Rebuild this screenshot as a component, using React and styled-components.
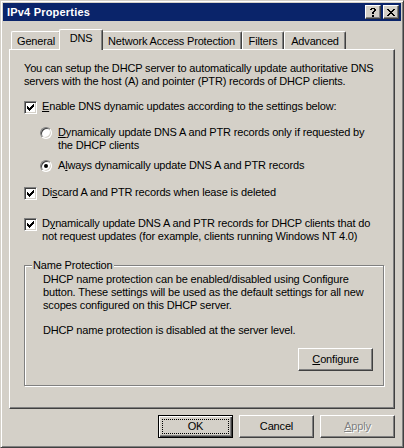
import React from 'react';
import styled, { createGlobalStyle } from 'styled-components';

const face = '#D4D0C8';
const shadow = '#808080';
const dark = '#404040';

const GlobalStyle = createGlobalStyle`
  * {
    box-sizing: border-box;
  }

  body {
    margin: 0;
    background: ${face};
    font-family: 'Liberation Sans', Arial, sans-serif;
    font-size: 11px;
    line-height: 13px;
    letter-spacing: -0.16px;
    color: #000;
  }
`;

const Window = styled.div`
  display: flex;
  flex-direction: column;
  width: 404px;
  height: 448px;
  padding: 2px;
  border: 1px solid;
  border-color: ${face} ${dark} ${dark} ${face};
  box-shadow: inset 1px 1px #fff, inset -1px -1px ${shadow};
  background: ${face};
`;

const TitleBar = styled.div`
  display: flex;
  align-items: center;
  height: 18px;
  padding: 0 2px;
  background: #0a246a;
`;

const Title = styled.div`
  flex: 1;
  padding-left: 2px;
  font-weight: bold;
  letter-spacing: 0.2px;
  color: #fff;
`;

const CaptionButtons = styled.div`
  display: flex;
  gap: 2px;
`;

const CaptionButton = styled.div`
  display: flex;
  align-items: center;
  justify-content: center;
  width: 16px;
  height: 14px;
  border: 1px solid;
  border-color: #fff ${dark} ${dark} #fff;
  box-shadow: inset -1px -1px ${shadow};
  background: ${face};

  svg {
    display: block;
  }
`;

const Body = styled.div`
  display: flex;
  flex-direction: column;
  padding: 8px 0 0 6px;
`;

const TabStrip = styled.div`
  position: relative;
  z-index: 1;
  display: flex;
  align-items: flex-end;
  height: 20px;
  margin-left: 2px;
`;

const Tab = styled.div`
  position: relative;
  z-index: ${({ $active }) => ($active ? 2 : 1)};
  width: ${({ $w, $active }) => $w + ($active ? 4 : 0)}px;
  height: ${({ $active }) => ($active ? 21 : 18)}px;
  margin: 0 ${({ $active }) => ($active ? -2 : 0)}px
    ${({ $active }) => ($active ? -1 : 0)}px;
  padding-top: ${({ $active }) => ($active ? 2 : 3)}px;
  border-top: 1px solid #fff;
  border-left: 1px solid #fff;
  border-right: 1px solid ${dark};
  border-radius: 2px 2px 0 0;
  box-shadow: inset -1px 0 ${shadow};
  background: ${face};
  text-align: center;
  white-space: nowrap;
`;

const Panel = styled.div`
  display: flex;
  flex-direction: column;
  align-items: flex-start;
  width: 386px;
  height: 360px;
  padding: 12px 0 0 14px;
  border-top: 1px solid #fff;
  border-left: 1px solid #fff;
  border-right: 1px solid ${dark};
  border-bottom: 1px solid ${dark};
  box-shadow: inset -1px -1px ${shadow};
`;

const Text = styled.p`
  margin: ${({ $top }) => $top || 0}px 0 0 ${({ $left }) => $left || 0}px;
  white-space: nowrap;
`;

const Option = styled.label`
  display: flex;
  align-items: flex-start;
  gap: ${({ $radio }) => ($radio ? 6 : 5)}px;
  margin: ${({ $top }) => $top}px 0 0 ${({ $indent }) => $indent || 0}px;
  white-space: nowrap;
`;

const CheckBox = styled.span`
  display: flex;
  align-items: center;
  justify-content: center;
  flex: none;
  width: 13px;
  height: 13px;
  margin-top: 1px;
  border: 1px solid;
  border-color: ${shadow} #fff #fff ${shadow};
  box-shadow: inset 1px 1px ${dark}, inset -1px -1px ${face};
  background: #fff;

  svg {
    display: block;
  }
`;

const Radio = styled.span`
  display: flex;
  align-items: center;
  justify-content: center;
  flex: none;
  width: 12px;
  height: 12px;
  margin-top: 1px;
  border: 1px solid;
  border-color: ${shadow} #fff #fff ${shadow};
  border-radius: 50%;
  box-shadow: inset 1px 1px ${dark}, inset -1px -1px ${face};
  background: #fff;

  &::after {
    content: '';
    display: ${({ $checked }) => ($checked ? 'block' : 'none')};
    width: 4px;
    height: 4px;
    border-radius: 50%;
    background: #000;
  }
`;

const U = styled.span`
  text-decoration: underline;
`;

const Group = styled.fieldset`
  width: 360px;
  margin: 16px 0 0;
  padding: 1px 10px 14px 7px;
  border: 1px solid ${shadow};
  box-shadow: inset 1px 1px #fff, 1px 1px #fff;
  min-inline-size: 0;
`;

const Legend = styled.legend`
  padding: 0 1px;
  background: ${face};
`;

const GroupActions = styled.div`
  display: flex;
  justify-content: flex-end;
  margin-top: 11px;
`;

const ButtonRow = styled.div`
  display: flex;
  justify-content: flex-end;
  gap: 6px;
  width: 386px;
  margin-top: 6px;
`;

const Button = styled.div`
  display: flex;
  align-items: stretch;
  flex: none;
  width: 75px;
  height: 23px;
  padding: ${({ $default }) => ($default ? 3 : 0)}px;
  border: 1px solid;
  border-color: ${({ $default }) =>
    $default ? '#000' : `#fff ${dark} ${dark} #fff`};
  box-shadow: ${({ $default }) =>
    $default
      ? `inset 1px 1px #fff, inset -1px -1px ${dark}, inset -2px -2px ${shadow}`
      : `inset -1px -1px ${shadow}`};
  background: ${face};
  color: ${({ $disabled }) => ($disabled ? shadow : '#000')};
  text-shadow: ${({ $disabled }) => ($disabled ? '1px 1px #fff' : 'none')};
`;

const ButtonLabel = styled.span`
  display: flex;
  flex: 1;
  align-items: center;
  justify-content: center;
  border: 1px dotted ${({ $focus }) => ($focus ? '#000' : 'transparent')};
`;

const Pixels = ({ rows, color = '#000' }) => (
  <svg
    width={rows[0].length}
    height={rows.length}
    shapeRendering="crispEdges"
  >
    {rows.flatMap((row, y) =>
      [...row].map((c, x) =>
        c === 'X' ? (
          <rect key={`${x}-${y}`} x={x} y={y} width="1" height="1" fill={color} />
        ) : null
      )
    )}
  </svg>
);

const helpGlyph = [
  '.XXXX.',
  'XX..XX',
  '....XX',
  '...XX.',
  '..XX..',
  '..XX..',
  '......',
  '..XX..',
  '..XX..',
];

const closeGlyph = [
  'XX....XX',
  '.XX..XX.',
  '..XXXX..',
  '...XX...',
  '..XXXX..',
  '.XX..XX.',
  'XX....XX',
];

const checkGlyph = [
  '......X',
  '.....XX',
  'X...XXX',
  'XX.XXX.',
  'XXXXX..',
  '.XXX...',
  '..X....',
];

const tabs = [
  { label: 'General', w: 50 },
  { label: 'DNS', w: 40, active: true },
  { label: 'Network Access Protection', w: 141 },
  { label: 'Filters', w: 42 },
  { label: 'Advanced', w: 62 },
];

const Check = ({ checked }) => (
  <CheckBox>{checked && <Pixels rows={checkGlyph} />}</CheckBox>
);

const App = () => (
  <>
    <GlobalStyle />
    <Window>
      <TitleBar>
        <Title>IPv4 Properties</Title>
        <CaptionButtons>
          <CaptionButton>
            <Pixels rows={helpGlyph} />
          </CaptionButton>
          <CaptionButton>
            <Pixels rows={closeGlyph} />
          </CaptionButton>
        </CaptionButtons>
      </TitleBar>
      <Body>
        <TabStrip>
          {tabs.map((t) => (
            <Tab key={t.label} $w={t.w} $active={t.active}>
              {t.label}
            </Tab>
          ))}
        </TabStrip>
        <Panel>
          <Text>
            You can setup the DHCP server to automatically update authoritative DNS
            <br />
            servers with the host (A) and pointer (PTR) records of DHCP clients.
          </Text>
          <Option $top={12}>
            <Check checked />
            <span>
              <U>E</U>nable DNS dynamic updates according to the settings below:
            </span>
          </Option>
          <Option $top={12} $indent={16} $radio>
            <Radio />
            <span>
              <U>D</U>ynamically update DNS A and PTR records only if requested by
              <br />
              the DHCP clients
            </span>
          </Option>
          <Option $top={7} $indent={16} $radio>
            <Radio $checked />
            <span>
              A<U>l</U>ways dynamically update DNS A and PTR records
            </span>
          </Option>
          <Option $top={14}>
            <Check checked />
            <span>
              Di<U>s</U>card A and PTR records when lease is deleted
            </span>
          </Option>
          <Option $top={17}>
            <Check checked />
            <span>
              D<U>y</U>namically update DNS A and PTR records for DHCP clients that do
              <br />
              not request updates (for example, clients running Windows NT 4.0)
            </span>
          </Option>
          <Group>
            <Legend>Name Protection</Legend>
            <Text $left={11}>
              DHCP name protection can be enabled/disabled using Configure
              <br />
              button. These settings will be used as the default settings for all new
              <br />
              scopes configured on this DHCP server.
            </Text>
            <Text $left={11} $top={12}>
              DHCP name protection is disabled at the server level.
            </Text>
            <GroupActions>
              <Button>
                <ButtonLabel>
                  <U>C</U>onfigure
                </ButtonLabel>
              </Button>
            </GroupActions>
          </Group>
        </Panel>
        <ButtonRow>
          <Button $default>
            <ButtonLabel $focus>OK</ButtonLabel>
          </Button>
          <Button>
            <ButtonLabel>Cancel</ButtonLabel>
          </Button>
          <Button $disabled>
            <ButtonLabel>
              <U>A</U>pply
            </ButtonLabel>
          </Button>
        </ButtonRow>
      </Body>
    </Window>
  </>
);

export default App;
